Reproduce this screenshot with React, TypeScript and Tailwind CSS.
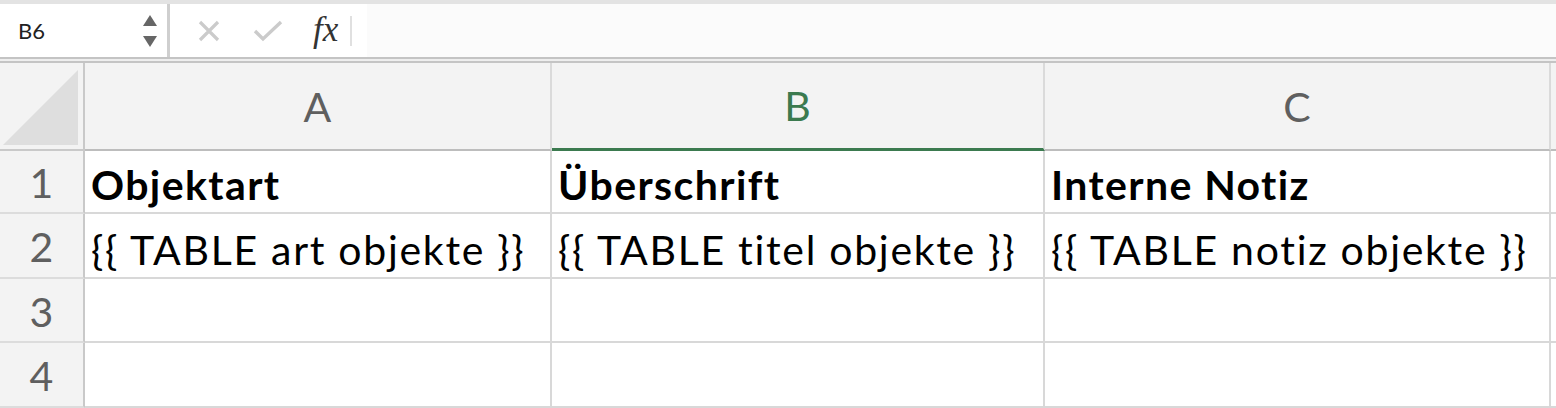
import React from 'react';

const columns = [
  { label: 'A', active: false },
  { label: 'B', active: true },
  { label: 'C', active: false },
];

const rows = [
  { n: 1, cells: ['Objektart', 'Überschrift', 'Interne Notiz'], bold: true },
  { n: 2, cells: ['{{ TABLE art objekte }}', '{{ TABLE titel objekte }}', '{{ TABLE notiz objekte }}'], bold: false },
  { n: 3, cells: ['', '', ''], bold: false },
  { n: 4, cells: ['', '', ''], bold: false },
];

const rowHeights = ['h-[63px]', 'h-[65px]', 'h-[64px]', 'h-[65px]'];

function FormulaBar() {
  return (
    <div className="flex flex-col">
      <div className="h-[4px] bg-[#e3e3e3]" />
      <div className="flex h-[53px]">
        {/* Name box */}
        <div className="w-[170px] flex items-center justify-between pl-[18px] pr-[10px] bg-white border-r-[3px] border-[#cfcfcf]">
          <span className="text-[22px] text-[#222] font-['Lato']">B6</span>
          <div className="flex flex-col gap-[10px] items-center">
            <svg width="14" height="11" viewBox="0 0 14 11">
              <polygon points="7,0 14,11 0,11" fill="#666" />
            </svg>
            <svg width="14" height="11" viewBox="0 0 14 11">
              <polygon points="0,0 14,0 7,11" fill="#666" />
            </svg>
          </div>
        </div>
        {/* Buttons */}
        <div className="flex items-center bg-white pl-[28px]">
          <svg width="22" height="22" viewBox="0 0 22 22">
            <path d="M2 2 L20 20 M20 2 L2 20" stroke="#cbcbcb" strokeWidth="3.2" />
          </svg>
          <svg width="30" height="22" viewBox="0 0 30 22" className="ml-[33px]">
            <path d="M2 11 L10 19 L28 2" stroke="#cbcbcb" strokeWidth="3.4" fill="none" />
          </svg>
          <span className="ml-[30px] text-[35px] italic text-[#333] font-['Liberation_Serif'] leading-none pb-[3px]">fx</span>
          <div className="ml-[12px] w-[2px] h-[30px] bg-[#e0e0e0]" />
        </div>
        <div className="flex-1 bg-[#fbfbfb] ml-[15px]" />
      </div>
      <div className="h-[6px] border-t-2 border-b-2 border-[#c4c4c4] bg-[#eeeeee]" />
    </div>
  );
}

export default function App() {
  return (
    <div className="w-[1556px] h-[408px] overflow-hidden bg-white font-['Lato',sans-serif]">
      <FormulaBar />
      <div className="grid grid-cols-[85px_467px_493px_506px_1fr]">
        {/* Header row */}
        <div className="h-[88px] bg-[#f3f3f3] border-r-2 border-b-2 border-[#c9c9c9] flex items-end justify-end pr-[5px] pb-[4px]">
          <svg width="75" height="75" viewBox="0 0 75 75">
            <polygon points="0,75 75,0 75,75" fill="#dedede" />
          </svg>
        </div>
        {columns.map((c) => (
          <div
            key={c.label}
            className={`h-[88px] bg-[#f3f3f3] border-r-2 border-[#dadada] flex items-center justify-center text-[41px] leading-none ${
              c.active ? 'border-b-[3px] border-b-[#3b7a4f] text-[#3b7a4f]' : 'border-b-2 border-b-[#bdbdbd] text-[#5f5f5f]'
            }`}
          >
            {c.label}
          </div>
        ))}
        <div className="h-[88px] bg-[#f3f3f3] border-b-2 border-[#bdbdbd]" />

        {rows.map((r, i) => (
          <React.Fragment key={r.n}>
            <div
              className={`${rowHeights[i]} bg-[#f3f3f3] border-r-2 border-[#c9c9c9] border-b-2 border-b-[#dcdcdc] flex items-center justify-center pt-[2px] text-[41px] leading-none text-[#5f5f5f]`}
            >
              {r.n}
            </div>
            {r.cells.map((t, j) => (
              <div
                key={j}
                className={`${rowHeights[i]} border-r-2 border-b-2 border-[#d8d8d8] flex items-end pl-[6px] pb-[4px] text-[41px] leading-none text-black whitespace-nowrap ${
                  r.bold ? 'font-bold tracking-[1.4px]' : 'tracking-[1.7px]'
                }`}
              >
                <span className="pb-[3px]">{t}</span>
              </div>
            ))}
            <div className={`${rowHeights[i]} border-b-2 border-[#d8d8d8]`} />
          </React.Fragment>
        ))}
      </div>
    </div>
  );
}
